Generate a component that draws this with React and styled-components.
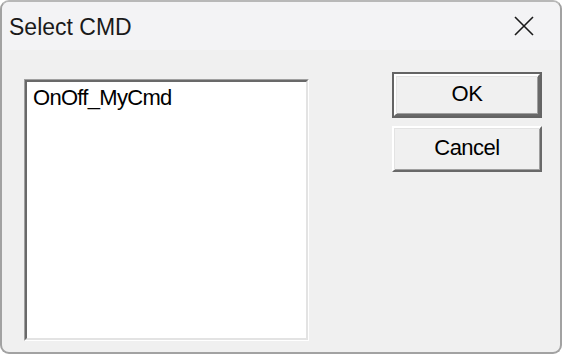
import React from "react"
import styled, {createGlobalStyle} from "styled-components"

const Global = createGlobalStyle`
html, body {
    margin: 0;
    padding: 0;
    background: #ffffff;
}
`

const Window = styled.div`
width: 562px;
height: 354px;
box-sizing: border-box;
border: 2px solid #a2a2a2;
border-top-color: #b8b8b8;
border-radius: 9px;
overflow: hidden;
background: #f0f0f0;
display: flex;
flex-direction: column;
`

const TitleBar = styled.div`
height: 48px;
flex-shrink: 0;
background: #f3f3f5;
display: flex;
align-items: center;
justify-content: space-between;
padding: 0 0 0 7px;
`

const Title = styled.span`
font-family: "Liberation Sans", Arial, sans-serif;
font-size: 23px;
color: #1a1a1a;
padding-top: 2px;
`

const CloseBtn = styled.div`
width: 72px;
height: 48px;
display: flex;
align-items: center;
justify-content: center;
padding-left: 6px;
`

const Body = styled.div`
flex: 1;
display: flex;
align-items: flex-start;
padding: 22px 0 0 22px;
gap: 83px;
`

const ListBox = styled.div`
width: 285px;
height: 262px;
margin-top: 7px;
box-sizing: border-box;
background: #ffffff;
border-style: solid;
border-width: 1px;
border-color: #a0a0a0 #ffffff #ffffff #a0a0a0;
`

const ListInner = styled.div`
width: 100%;
height: 100%;
box-sizing: border-box;
border-style: solid;
border-width: 2px;
border-color: #696969 #e3e3e3 #e3e3e3 #696969;
padding: 4px 0 0 6px;
`

const Item = styled.div`
font-family: "Liberation Sans", Arial, sans-serif;
font-size: 22px;
line-height: 24px;
letter-spacing: -0.7px;
color: #000000;
`

const Buttons = styled.div`
display: flex;
flex-direction: column;
gap: 8px;
`

const Button = styled.div`
width: 150px;
height: 46px;
box-sizing: border-box;
border: ${p => p.$default ? "2px solid #646464" : "none"};
display: flex;
`

const Face = styled.div`
flex: 1;
box-sizing: border-box;
border-style: solid;
border-width: 2px;
border-color: #ffffff #696969 #696969 #ffffff;
box-shadow: inset 1px 1px 0 #e3e3e3, inset -1px -1px 0 #a0a0a0;
background: #f0f0f0;
display: flex;
align-items: center;
justify-content: center;
font-family: "Liberation Sans", Arial, sans-serif;
font-size: 22px;
letter-spacing: -0.5px;
color: #000000;
padding-bottom: 2px;
`

export default function App(){
    return(
        <>
            <Global />
            <Window>
                <TitleBar>
                    <Title>Select CMD</Title>
                    <CloseBtn>
                        <svg width="20" height="20" viewBox="0 0 20 20">
                            <path d="M1 1 L19 19 M19 1 L1 19" stroke="#1a1a1a" strokeWidth="1.6" fill="none" />
                        </svg>
                    </CloseBtn>
                </TitleBar>
                <Body>
                    <ListBox>
                        <ListInner>
                            <Item>OnOff_MyCmd</Item>
                        </ListInner>
                    </ListBox>
                    <Buttons>
                        <Button $default>
                            <Face>OK</Face>
                        </Button>
                        <Button>
                            <Face>Cancel</Face>
                        </Button>
                    </Buttons>
                </Body>
            </Window>
        </>
    )
}
